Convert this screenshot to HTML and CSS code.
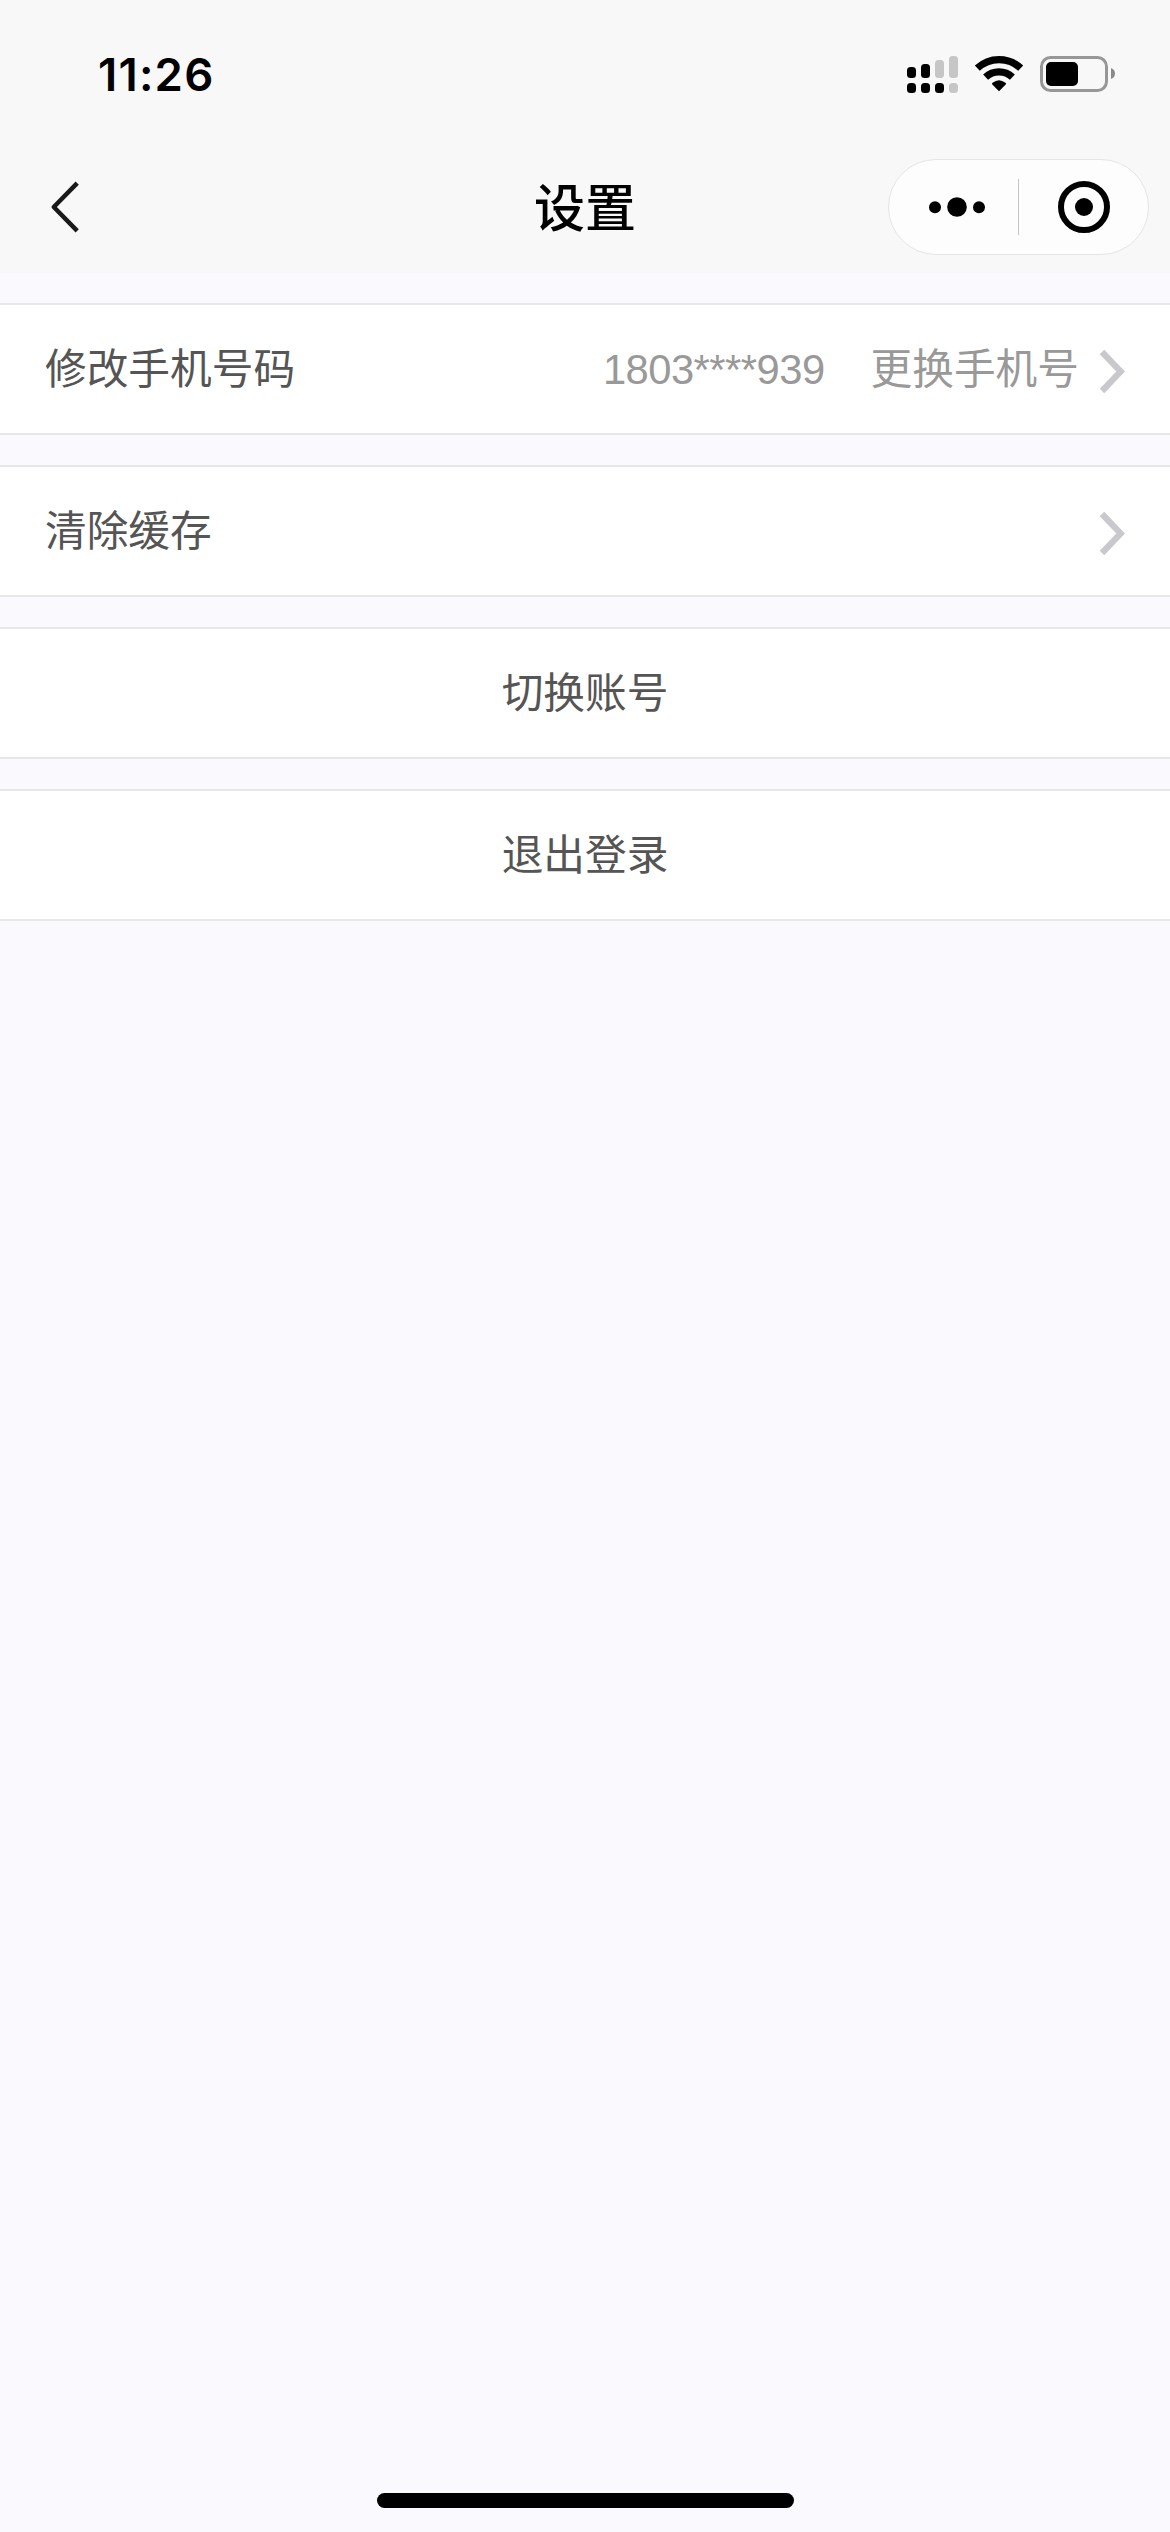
FILE: index.html
```html
<!DOCTYPE html>
<html lang="zh-CN">
<head>
<meta charset="utf-8">
<title>设置</title>
<link rel="stylesheet" href="styles.css">
</head>
<body>
<div class="page">
  <header class="header">
    <div class="status-bar">
      <time class="clock">11:26</time>
      <svg class="status-icons" width="210" height="40" viewBox="907 54 210 40">
        <g>
          <rect x="907" y="67" width="9" height="11" rx="3.5"/>
          <rect x="921" y="64" width="9" height="14" rx="3.5"/>
          <rect x="907" y="83" width="9" height="10" rx="3.5"/>
          <rect x="921" y="83" width="9" height="10" rx="3.5"/>
          <rect x="935" y="83" width="9" height="10" rx="3.5"/>
        </g>
        <g fill="#c6c6c6">
          <rect x="935" y="60" width="9" height="18" rx="3.5"/>
          <rect x="949" y="56" width="9" height="22" rx="3.5"/>
          <rect x="949" y="83" width="9" height="10" rx="3.5"/>
        </g>
        <path d="M999 91.3 L992.3 84.6 Q991.5 83.6 992.6 82.8 Q999 77.8 1005.4 82.8 Q1006.5 83.6 1005.7 84.6 Z"/>
        <g fill="none" stroke="#000" stroke-width="7.2">
          <path d="M977.3 68.2 A31.5 31.5 0 0 1 1020.7 68.2"/>
          <path d="M985.6 77.2 A19.5 19.5 0 0 1 1012.4 77.2"/>
        </g>
        <rect x="1041.5" y="57.5" width="65" height="33" rx="9" fill="none" stroke="#979797" stroke-width="3"/>
        <rect x="1046" y="62" width="32" height="24" rx="5"/>
        <path d="M1111 68 Q1115 69.5 1115 73.5 Q1115 77.5 1111 79 Z" fill="#8a8a8a"/>
      </svg>
    </div>
    <div class="nav-bar">
      <svg class="back" width="30" height="54" viewBox="50 180 30 54">
        <path d="M77.2 183.2 L53.8 207 L77.2 230.8" fill="none" stroke="#1a1a1a" stroke-width="4.5" stroke-linejoin="round"/>
      </svg>
      <h1 class="title">设置</h1>
      <div class="capsule">
        <svg class="more" width="58" height="20" viewBox="0 0 58 20">
          <circle cx="7" cy="10.3" r="6"/><circle cx="29" cy="10" r="9.8"/><circle cx="51" cy="10.3" r="6"/>
        </svg>
        <span class="divider"></span>
        <svg class="close" width="52" height="52" viewBox="0 0 52 52">
          <circle cx="26" cy="26" r="23" fill="none" stroke="#000" stroke-width="6"/><circle cx="26" cy="26" r="9"/>
        </svg>
      </div>
    </div>
  </header>
  <main class="list">
    <div class="row">
      <span class="label">修改手机号码</span>
      <span class="phone">1803****939</span>
      <span class="action">更换手机号</span>
      <svg class="chevron" width="27" height="45" viewBox="0 0 27 45"><path d="M3 3 L21.7 22.5 L3 42" fill="none" stroke="#c8c8cd" stroke-width="6.2"/></svg>
    </div>
    <div class="row">
      <span class="label">清除缓存</span>
      <svg class="chevron" width="27" height="45" viewBox="0 0 27 45"><path d="M3 3 L21.7 22.5 L3 42" fill="none" stroke="#c8c8cd" stroke-width="6.2"/></svg>
    </div>
    <div class="row row-center"><span>切换账号</span></div>
    <div class="row row-center"><span>退出登录</span></div>
  </main>
  <div class="home-indicator"></div>
</div>
</body>
</html>
```
FILE: styles.css
```css
* {
  box-sizing: border-box;
}

body {
  margin: 0;
  background: #faf9fe;
  font-family: "Liberation Sans", "Noto Sans CJK SC", sans-serif;
}

svg {
  display: block;
  flex: none;
}

.page {
  display: flex;
  flex-direction: column;
  width: 1170px;
  height: 2532px;
}

.header {
  height: 273px;
  background: #f8f8f8;
}

.status-bar {
  display: flex;
  justify-content: space-between;
  height: 141px;
  padding: 54px 53px 0 98px;
}

.clock {
  height: 40px;
  font: 600 45.5px/42px Inter, sans-serif;
  letter-spacing: 1.2px;
  color: #000;
}

.nav-bar {
  display: grid;
  grid-template-columns: 1fr auto 1fr;
  align-items: center;
  height: 132px;
  padding: 0 21px 0 50px;
}

.title {
  margin: 0 0 5px -29px;
  font: 500 51px/72px "Noto Sans CJK SC", sans-serif;
  color: #000;
}

.capsule {
  justify-self: end;
  display: flex;
  align-items: center;
  width: 261px;
  height: 96px;
  padding-left: 39px;
  border: 1px solid #e5e5e5;
  border-radius: 48px;
  background: #fdfdfd;
}

.divider {
  width: 1px;
  height: 56px;
  margin: 0 39px 0 32px;
  background: #c4c4c4;
}

.list {
  display: flex;
  flex: 1;
  flex-direction: column;
  gap: 30px;
  padding-top: 30px;
}

.row {
  display: flex;
  align-items: center;
  height: 132px;
  padding: 2px 44px 0 45px;
  border: solid #e7e7e9;
  border-width: 2px 0;
  background: #fff;
  color: #555;
  font-size: 41.7px;
  line-height: 62px;
}

.row-center {
  justify-content: center;
  padding: 2px 0 0;
}

.label {
  flex: 1;
}

.phone,
.action {
  color: #999;
}

.phone {
  letter-spacing: -0.5px;
}

.action {
  margin: 0 20px 0 46px;
}

.chevron {
  margin-top: 3px;
}

.home-indicator {
  width: 417px;
  height: 15px;
  margin: 0 auto 24px;
  border-radius: 8px;
  background: #000;
}
```
